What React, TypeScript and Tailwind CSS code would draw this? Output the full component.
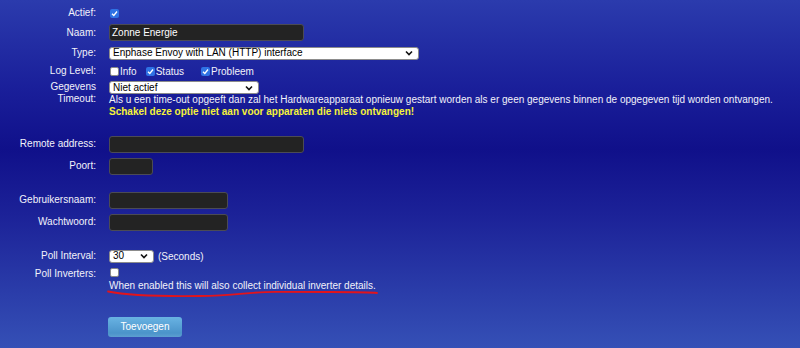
import React from "react";

const Check = ({ checked }: { checked: boolean }) =>
  checked ? (
    <span className="inline-flex h-[9px] w-[9px] shrink-0 items-center justify-center rounded-[2px] bg-[#2f72e4]">
      <svg width="7" height="7" viewBox="0 0 7 7">
        <path d="M1 3.8 L2.8 5.5 L6 1.5" fill="none" stroke="#fff" strokeWidth="1.3" />
      </svg>
    </span>
  ) : (
    <span className="inline-block h-[9px] w-[9px] shrink-0 rounded-[2px] border border-[#8a8a8a] bg-white" />
  );

const Chevron = () => (
  <svg width="8" height="6" viewBox="0 0 8 6" className="shrink-0">
    <path d="M1 1.5 L4 4.5 L7 1.5" fill="none" stroke="#111" strokeWidth="1.6" />
  </svg>
);

const Select = ({ text, w }: { text: string; w: string }) => (
  <div
    className={`flex h-[13px] items-center justify-between rounded-[3px] border border-[#8c8c8c] bg-white pl-[3px] pr-[5px] text-[10px] leading-none text-black ${w}`}
  >
    <span>{text}</span>
    <Chevron />
  </div>
);

const Input = ({ w, value }: { w: string; value?: string }) => (
  <div
    className={`flex h-[17px] items-center rounded-[3px] border border-[#4b4b55] bg-[#232323] px-[2px] text-[10px] leading-none text-white ${w}`}
  >
    {value}
  </div>
);

const Row = ({
  label,
  children,
  className = "",
}: {
  label: React.ReactNode;
  children?: React.ReactNode;
  className?: string;
}) => (
  <div className={`flex items-center ${className}`}>
    <div className="w-[96px] shrink-0 text-right leading-[12px]">{label}</div>
    <div className="flex items-center pl-[13px]">{children}</div>
  </div>
);

export default function App() {
  return (
    <div
      className="relative h-[348px] w-[800px] overflow-hidden bg-[linear-gradient(to_bottom,#2b3bad_0%,#1a1f9a_25%,#10108a_43%,#1c2298_62%,#3550b6_100%)] pt-[6px] text-[10px] text-[#f2f2fa]"
      style={{ fontFamily: '"Liberation Sans", Arial, sans-serif' }}
    >
      <Row label="Actief:" className="h-[14px]">
        <span className="pl-[1px]">
          <Check checked />
        </span>
      </Row>
      <Row label="Naam:" className="mt-[4px] h-[17px]">
        <Input w="w-[195px]" value="Zonne Energie" />
      </Row>
      <Row label="Type:" className="mt-[5px] h-[14px]">
        <Select text="Enphase Envoy with LAN (HTTP) interface" w="w-[310px]" />
      </Row>
      <Row label="Log Level:" className="mt-[4px] h-[14px]">
        <span className="flex items-center pl-[1px]">
          <Check checked={false} />
          <span className="ml-[1px]">Info</span>
          <span className="ml-[9px]">
            <Check checked />
          </span>
          <span className="ml-[1px]">Status</span>
          <span className="ml-[17px]">
            <Check checked />
          </span>
          <span className="ml-[1px]">Probleem</span>
        </span>
      </Row>
      <div className="mt-[3px] flex items-start">
        <div className="w-[96px] shrink-0 text-right leading-[12.3px]">
          Gegevens
          <br />
          Timeout:
        </div>
        <div className="flex flex-col pl-[13px]">
          <Select text="Niet actief" w="w-[150px]" />
          <div className="leading-[12.3px]">
            Als u een time-out opgeeft dan zal het Hardwareapparaat opnieuw gestart worden als er geen gegevens binnen de
            opgegeven tijd worden ontvangen.
          </div>
          <div className="font-bold leading-[12.3px] text-[#f5f23a]">
            Schakel deze optie niet aan voor apparaten die niets ontvangen!
          </div>
        </div>
      </div>
      <Row label="Remote address:" className="mt-[17px] h-[17px]">
        <Input w="w-[195px]" />
      </Row>
      <Row label="Poort:" className="mt-[5px] h-[17px]">
        <Input w="w-[44px]" />
      </Row>
      <Row label="Gebruikersnaam:" className="mt-[17px] h-[17px]">
        <Input w="w-[119px]" />
      </Row>
      <Row label="Wachtwoord:" className="mt-[5px] h-[17px]">
        <Input w="w-[119px]" />
      </Row>
      <Row label="Poll Interval:" className="mt-[19px] h-[13px]">
        <Select text="30" w="w-[45px]" />
        <span className="ml-[4px]">(Seconds)</span>
      </Row>
      <Row label="Poll Inverters:" className="mt-[5px] h-[12px]">
        <span className="pl-[1px]">
          <Check checked={false} />
        </span>
      </Row>
      <div className="flex h-[12px] items-center pl-[109px] leading-[12px]">
        When enabled this will also collect individual inverter details.
      </div>
      <div className="mt-[25px] pl-[108px]">
        <div className="flex h-[20px] w-[74px] items-center justify-center rounded-[3px] bg-[linear-gradient(to_bottom,#69b3e3,#4b94ca_80%,#5d9fd0)] text-[10px] text-white">
          Toevoegen
        </div>
      </div>
      <svg className="absolute left-0 top-0" width="800" height="348" viewBox="0 0 800 348">
        <path
          d="M108 291.5 C125 295 160 296.5 200 296 C235 295.5 250 292 275 291.8 L330 292 C355 292 370 292 377 293"
          fill="none"
          stroke="#e2141c"
          strokeWidth="1.8"
          strokeLinecap="round"
        />
      </svg>
    </div>
  );
}
